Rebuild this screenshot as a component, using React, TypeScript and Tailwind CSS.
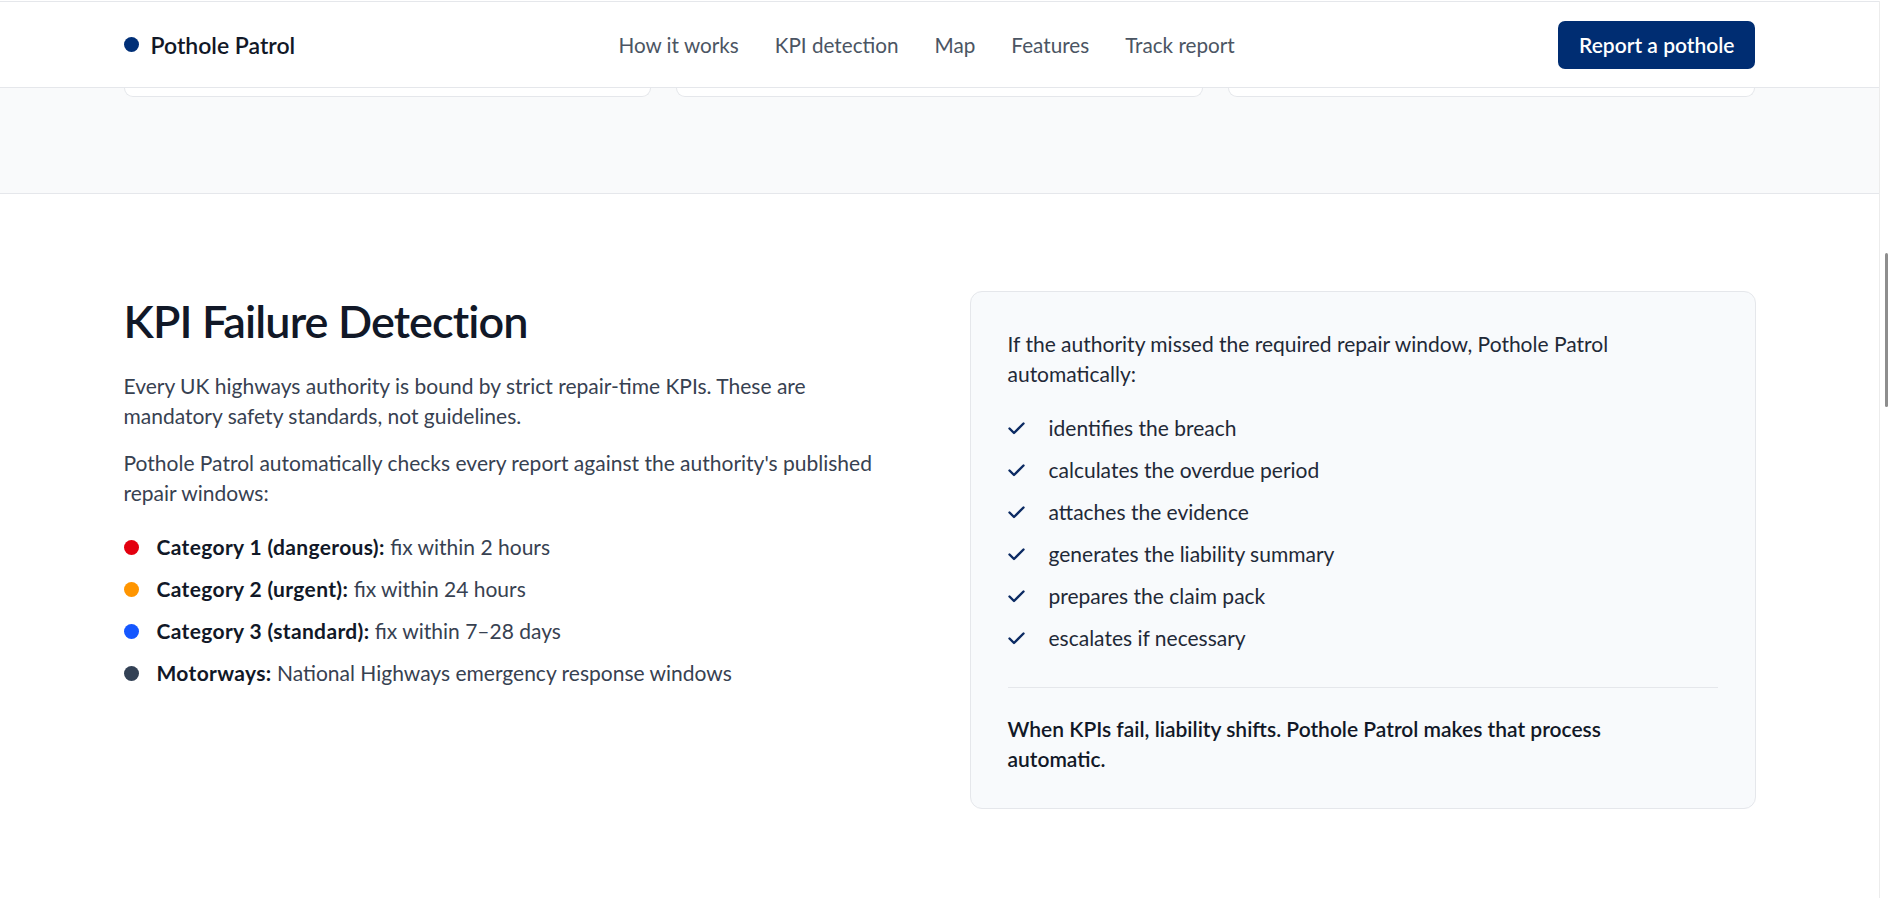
import React from "react";

const navItems = ["How it works", "KPI detection", "Map", "Features", "Track report"];

const categories = [
  { dot: "bg-[#e3000f]", label: "Category 1 (dangerous):", text: "fix within 2 hours" },
  { dot: "bg-[#ff9500]", label: "Category 2 (urgent):", text: "fix within 24 hours" },
  { dot: "bg-[#1557ff]", label: "Category 3 (standard):", text: "fix within 7–28 days" },
  { dot: "bg-[#334155]", label: "Motorways:", text: "National Highways emergency response windows" },
];

const steps = [
  "identifies the breach",
  "calculates the overdue period",
  "attaches the evidence",
  "generates the liability summary",
  "prepares the claim pack",
  "escalates if necessary",
];

function CheckIcon() {
  return (
    <svg width="17" height="13" viewBox="0 0 17 13" fill="none" className="shrink-0">
      <path d="M1.5 6.5 L6 11 L15.5 1.5" stroke="#0b2a63" strokeWidth="2.4" strokeLinecap="round" strokeLinejoin="round" />
    </svg>
  );
}

export default function App() {
  return (
    <div className="flex min-h-screen bg-white pt-[1px] font-['Lato','Liberation_Sans',sans-serif] text-[21px] leading-[30px] text-[#374151] antialiased">
      <div className="min-w-0 flex-1 border-r border-[#ececec]">
        <header className="border-y border-[#e5e7eb] bg-white">
          <div className="mx-auto flex h-[85px] max-w-[1632px] items-center justify-between">
            <div className="flex items-center gap-[12px]">
              <span className="h-[15px] w-[15px] rounded-full bg-[#002f77]" />
              <span className="text-[23px] font-semibold text-[#111827]">Pothole Patrol</span>
            </div>
            <nav className="flex items-center gap-[36px] text-[20.7px] text-[#4b5563]">
              {navItems.map((n) => (
                <a key={n} className="cursor-pointer">{n}</a>
              ))}
            </nav>
            <button className="h-[48px] rounded-[7px] bg-[#002d72] px-[21px] text-[21px] font-semibold text-white">
              Report a pothole
            </button>
          </div>
        </header>

        <section className="h-[106px] border-b border-[#e5e7eb] bg-[#f9fafb]">
          <div className="mx-auto grid max-w-[1632px] grid-cols-3 gap-[25px]">
            {[0, 1, 2].map((i) => (
              <div key={i} className="h-[9px] rounded-b-[10px] border-x border-b border-[#e5e7eb] bg-white" />
            ))}
          </div>
        </section>

        <section className="pb-[89px] pt-[97px]">
          <div className="mx-auto grid max-w-[1632px] grid-cols-2 items-start gap-[60px]">
            <div>
              <h2 className="text-[45px] font-semibold leading-[60px] tracking-[-0.9px] text-[#111827]">
                KPI Failure Detection
              </h2>
              <p className="mt-[20px] max-w-[765px]">
                Every UK highways authority is bound by strict repair-time KPIs. These are mandatory safety standards, not guidelines.
              </p>
              <p className="mt-[17px] max-w-[765px]">
                Pothole Patrol automatically checks every report against the authority's published repair windows:
              </p>
              <ul className="mt-[24px] flex flex-col gap-[12px]">
                {categories.map((c) => (
                  <li key={c.label} className="flex items-center gap-[18px]">
                    <span className={`h-[15px] w-[15px] shrink-0 rounded-full ${c.dot}`} />
                    <span>
                      <strong className="font-bold tracking-[0.35px] text-[#111827]">{c.label}</strong> {c.text}
                    </span>
                  </li>
                ))}
              </ul>
            </div>

            <div className="rounded-[12px] border border-[#e5e7eb] bg-[#f8fafc] px-[37px] pb-[34px] pt-[37px] text-[#1f2937]">
              <p className="max-w-[660px]">
                If the authority missed the required repair window, Pothole Patrol automatically:
              </p>
              <ul className="mt-[24px] flex flex-col gap-[12px]">
                {steps.map((s) => (
                  <li key={s} className="flex items-center gap-[24px]">
                    <CheckIcon />
                    <span>{s}</span>
                  </li>
                ))}
              </ul>
              <div className="mt-[34px] border-t border-[#e5e7eb]" />
              <p className="mt-[26px] max-w-[660px] font-semibold text-[#111827]">
                When KPIs fail, liability shifts. Pothole Patrol makes that process automatic.
              </p>
            </div>
          </div>
        </section>
      </div>
      <div className="w-[8px] shrink-0 bg-white">
        <div className="ml-auto mt-[252px] h-[154px] w-[3px] rounded-full bg-[#8e8e8e]" />
      </div>
    </div>
  );
}
